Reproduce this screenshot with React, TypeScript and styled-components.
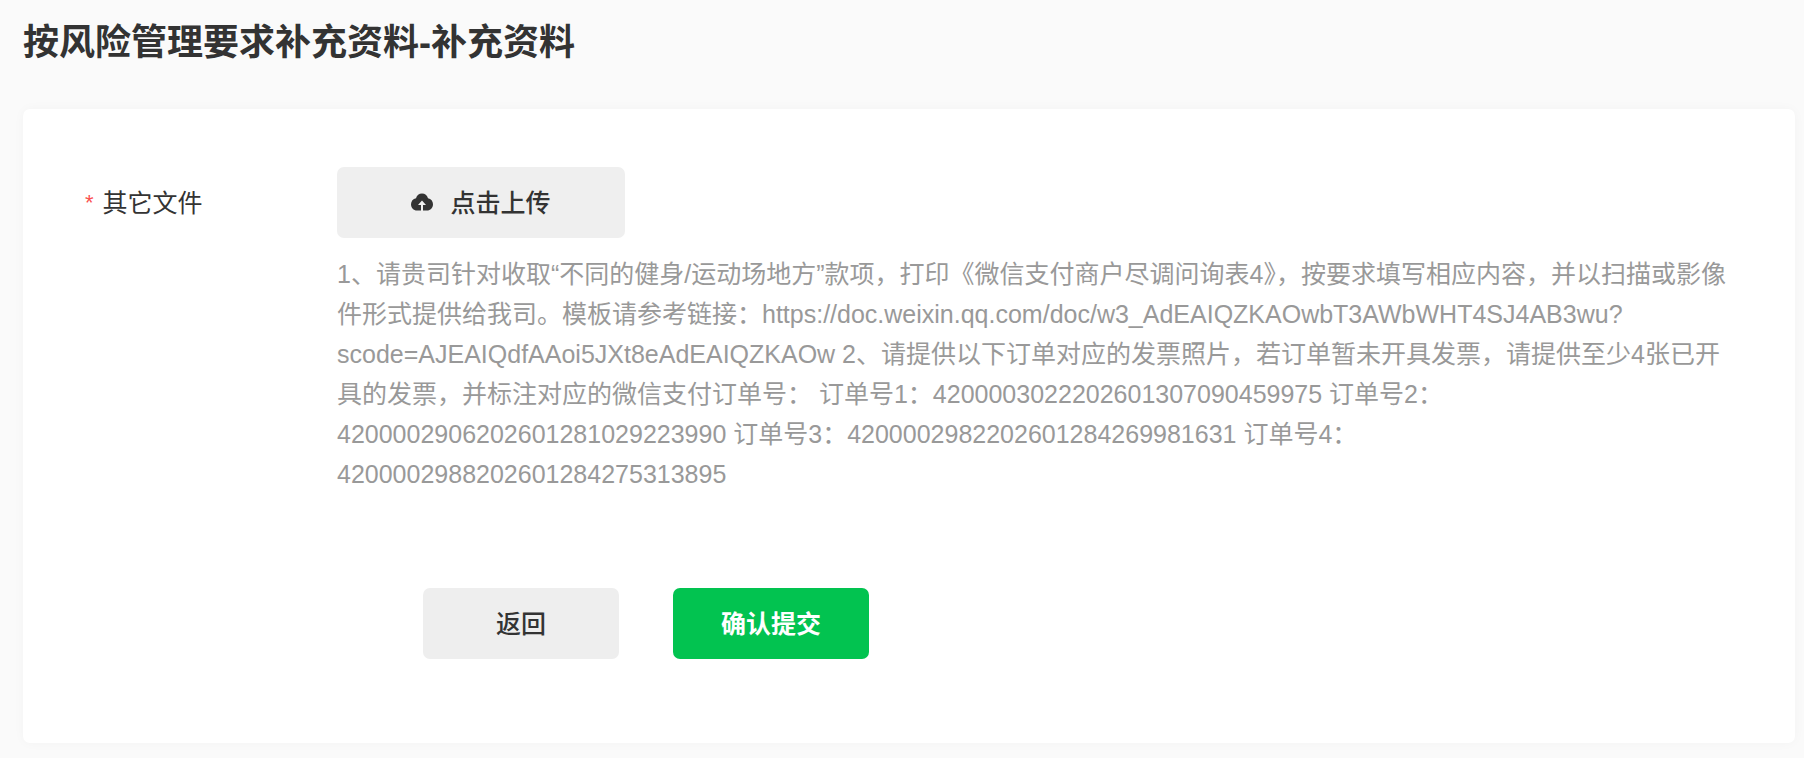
import React from 'react';
import styled, { createGlobalStyle } from 'styled-components';

const Global = createGlobalStyle`
  * { box-sizing: border-box; }
  body {
    margin: 0;
    background: #fafafa;
    color: #333;
    font-family: "Liberation Sans", "Noto Sans CJK SC", sans-serif;
    font-size: 25px;
  }
`;

const Page = styled.main`
  padding: 17px 9px 15px 23px;
`;

const Title = styled.h1`
  margin: 0 0 40px;
  font-size: 36px;
  line-height: 52px;
  font-weight: 600;
`;

const Card = styled.form`
  background: #fff;
  border-radius: 7px;
  box-shadow: 0 0 12px rgba(0, 0, 0, 0.03);
  padding: 58px 52px 84px 62px;
`;

const Field = styled.div`
  display: flex;
  align-items: flex-start;
`;

const Label = styled.label`
  flex: 0 0 252px;
  display: flex;
  gap: 9px;
  line-height: 72px;
`;

const Required = styled.span`
  color: #fa5151;
  font-size: 22px;
`;

const Content = styled.div`
  flex: 1;
  min-width: 0;
`;

const Button = styled.button<{ $primary?: boolean; $wide?: boolean }>`
  display: flex;
  align-items: center;
  justify-content: center;
  gap: 17px;
  width: ${(p) => (p.$wide ? 288 : 196)}px;
  height: 71px;
  padding: 0 0 4px;
  border: 0;
  border-radius: 7px;
  background: ${(p) => (p.$primary ? '#02c350' : p.$wide ? '#efefef' : '#eee')};
  color: ${(p) => (p.$primary ? '#fff' : '#333')};
  font: inherit;
  font-weight: ${(p) => (p.$primary ? 700 : 500)};
  cursor: pointer;

  svg { margin-top: 2px; }
`;

const Hint = styled.p`
  margin: 16px 0 0;
  color: #999;
  line-height: 40px;
`;

const Actions = styled.div`
  display: flex;
  gap: 54px;
  margin: 94px 0 0 338px;
`;

const CloudIcon = () => (
  <svg width="22" height="18" viewBox="0 0 22 18" aria-hidden="true">
    <path
      fill="#333"
      fillRule="evenodd"
      d="M5 5.200C5.800 2.300 8 .5 11 .5s5.200 1.800 6 4.700c3 .600 5 3 5 6 0 3.700-2.600 6.300-6 6.300H6c-3.400 0-6-2.600-6-6.300 0-3 2-5.400 5-6zM11 7.500l-4 4.500h3v5.500h2V12h3z"
    />
  </svg>
);

export default function App() {
  return (
    <>
      <Global />
      <Page>
        <Title>按风险管理要求补充资料-补充资料</Title>
        <Card onSubmit={(e) => e.preventDefault()}>
          <Field>
            <Label htmlFor="upload"><Required>*</Required>其它文件</Label>
            <Content>
              <Button id="upload" type="button" $wide><CloudIcon />点击上传</Button>
              <Hint>1、请贵司针对收取“不同的健身/运动场地方”款项，打印《微信支付商户尽调问询表4》，按要求填写相应内容，并以扫描或影像件形式提供给我司。模板请参考链接：https://doc.weixin.qq.com/doc/w3_AdEAIQZKAOwbT3AWbWHT4SJ4AB3wu?scode=AJEAIQdfAAoi5JXt8eAdEAIQZKAOw 2、请提供以下订单对应的发票照片，若订单暂未开具发票，请提供至少4张已开具的发票，并标注对应的微信支付订单号： 订单号1：4200003022202601307090459975 订单号2：4200002906202601281029223990 订单号3：4200002982202601284269981631 订单号4：4200002988202601284275313895</Hint>
            </Content>
          </Field>
          <Actions>
            <Button type="button">返回</Button>
            <Button type="submit" $primary>确认提交</Button>
          </Actions>
        </Card>
      </Page>
    </>
  );
}
